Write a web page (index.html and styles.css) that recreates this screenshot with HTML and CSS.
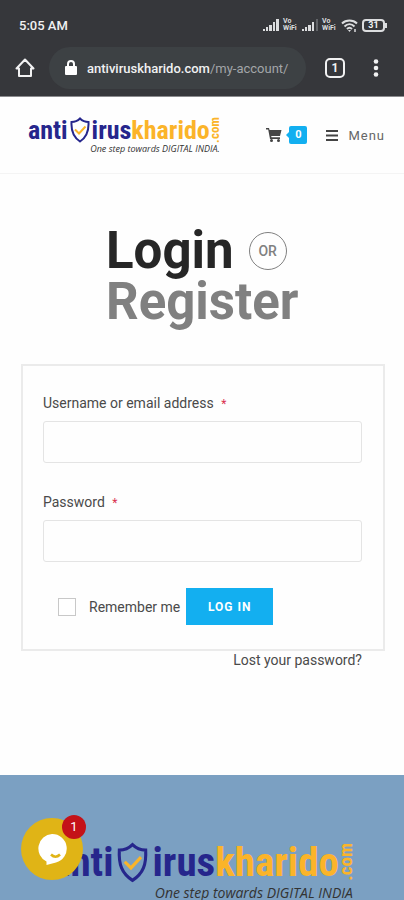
FILE: index.html
```html
<!DOCTYPE html>
<html lang="en">
<head>
    <meta charset="UTF-8">
    <meta name="viewport" content="width=device-width, initial-scale=1.0">
    <title>My account</title>
    <link rel="stylesheet" href="styles.css">
</head>
<body>
    <!-- Browser bar -->
    <div class="browser">
        <div class="status">
            <span class="time">5:05 AM</span>
            <div class="status-icons">
                <svg width="16" height="12" viewBox="0 0 16 12" fill="#dcdddf"><path d="M0 10h2v2H0zM3 8h2v4H3zM6 6h3v6H6zM10 3h2v9h-2zM13 0h3v12h-3z"/></svg>
                <span class="vo">Vo<br>WiFi</span>
                <svg width="16" height="12" viewBox="0 0 16 12" fill="#dcdddf"><path d="M0 10h2v2H0zM3 8h2v4H3zM6 6h3v6H6z"/><path d="M10 3h2v9h-2z"/><path d="M14 0h2v12h-2z" fill="#626468"/></svg>
                <span class="vo">Vo<br>WiFi</span>
                <svg width="17" height="13" viewBox="0 0 17 13" fill="none" stroke="#dcdddf" stroke-width="2"><path d="M1 4.500C5 .5 12 .5 16 4.500M3.500 7.500c3-3 7-3 10 0M6 10c1.500-1.500 3.500-1.500 5 0"/><path d="M7 11h3l-1.500 2z" fill="#dcdddf" stroke="none"/><path d="M14 10v3" stroke-width="1.500"/></svg>
                <span class="battery">31</span>
            </div>
        </div>
        <div class="toolbar">
            <button class="icon-btn" aria-label="Home">
                <svg width="20" height="20" viewBox="0 0 20 20" fill="none" stroke="#f1f1f2" stroke-width="2" stroke-linejoin="round"><path d="M1.500 10.500 10 1.500l8.500 9H16V18H4v-7.500z"/></svg>
            </button>
            <div class="address">
                <svg width="12" height="16" viewBox="0 0 12 16"><rect y="6" width="12" height="9" rx="1" fill="#fff"/><path d="M3 7V4a3 3 0 0 1 6 0v3" fill="none" stroke="#fff" stroke-width="2"/></svg>
                <span class="url">antiviruskharido.com<span class="path">/my-account/</span></span>
            </div>
            <button class="tabs" aria-label="Tabs">1</button>
            <button class="icon-btn" aria-label="More">
                <svg width="6" height="18" viewBox="0 0 6 18" fill="#f1f1f2"><circle cx="3" cy="2.500" r="2.300"/><circle cx="3" cy="9" r="2.300"/><circle cx="3" cy="15.500" r="2.300"/></svg>
            </button>
        </div>
    </div>

    <!-- Site header -->
    <header class="header">
        <a href="#" class="logo">
            <span class="logo-name">
                <span class="blue">anti</span>
                <svg class="shield" viewBox="0 0 20 26" fill="none"><path d="M10 1.500C7.500 4 4.500 5 1.500 5 1 14 3 20 10 24.500 17 20 19 14 18.500 5c-3 0-6-1-8.500-3.500z" stroke="#26268c" stroke-width="2"/><path d="M5 12.500l4 4 6.500-7" stroke="#fbb429" stroke-width="2"/></svg>
                <span class="blue">irus</span><span class="gold">kharido</span><span class="gold com">.com</span>
            </span>
            <span class="tagline">One step towards DIGITAL INDIA.</span>
        </a>
        <nav class="nav">
            <a href="#" class="cart">
                <svg width="16" height="14" viewBox="0 0 16 14" fill="#444"><path d="M0 0h3l.5 2H15.500L14 8H5.200l.3 1.300H14V11H4L2.200 1.500H0z"/><circle cx="5.500" cy="12.500" r="1.500"/><circle cx="12.500" cy="12.500" r="1.500"/></svg>
                <span class="count">0</span>
            </a>
            <a href="#" class="menu">
                <svg width="12" height="11" viewBox="0 0 12 11" fill="#444"><path d="M0 0h12v2H0zM0 4.500h12v2H0zM0 9h12v2H0z"/></svg>
                Menu
            </a>
        </nav>
    </header>

    <main class="account">
        <h1 class="title">
            <span class="login">Login</span>
            <span class="or">OR</span>
            <span class="register">Register</span>
        </h1>

        <form class="login-form">
            <label for="username">Username or email address <span class="required">*</span></label>
            <input type="text" id="username" class="field">
            <label for="password">Password <span class="required">*</span></label>
            <input type="password" id="password" class="field">
            <div class="actions">
                <input type="checkbox" id="remember">
                <label for="remember">Remember me</label>
                <button type="button" class="submit">LOG IN</button>
            </div>
        </form>
        <a href="#" class="lost">Lost your password?</a>
    </main>

    <footer class="footer">
        <a href="#" class="logo logo-large">
            <span class="logo-name">
                <span class="blue">anti</span>
                <svg class="shield" viewBox="0 0 20 26" fill="none"><path d="M10 1.500C7.500 4 4.500 5 1.500 5 1 14 3 20 10 24.500 17 20 19 14 18.500 5c-3 0-6-1-8.500-3.500z" stroke="#26268c" stroke-width="2"/><path d="M5 12.500l4 4 6.500-7" stroke="#fbb429" stroke-width="2"/></svg>
                <span class="blue">irus</span><span class="gold">kharido</span><span class="gold com">.com</span>
            </span>
            <span class="tagline">One step towards DIGITAL INDIA</span>
        </a>
    </footer>

    <button class="chat" aria-label="Chat">
        <svg width="32" height="32" viewBox="0 0 32 32"><path d="M16 1a14.500 14.500 0 0 1 4 28.500L10.500 32v-3.500A14.500 14.500 0 0 1 16 1z" fill="#fff"/><path d="M15 21.500q4.500 4.500 9 0" fill="none" stroke="#e0b416" stroke-width="2.500"/></svg>
        <span class="unread">1</span>
    </button>
</body>
</html>
```
FILE: styles.css
```css
* {
    box-sizing: border-box;
}
body {
    margin: 0;
    height: 100vh;
    overflow: hidden;
    display: flex;
    flex-direction: column;
    font-family: Roboto, "Liberation Sans", sans-serif;
    font-size: 14px;
    color: #4a4a4a;
    background: #fefefe;
}
a {
    color: inherit;
    text-decoration: none;
}
button {
    font-family: inherit;
    border: none;
    padding: 0;
    background: none;
    cursor: pointer;
}
svg {
    display: block;
    flex: none;
}

/* browser bar */
.browser {
    flex: none;
    background: #36373b;
    color: #f1f1f2;
    border-bottom: 1px solid #8b8b8e;
}
.status {
    display: flex;
    justify-content: space-between;
    align-items: center;
    height: 46px;
    padding: 4px 16px 0 19px;
}
.time {
    font-size: 13px;
    font-weight: 500;
}
.status-icons {
    display: flex;
    align-items: center;
    gap: 4px;
}
.vo {
    width: 15px;
    font-size: 7px;
    line-height: 7px;
    font-weight: 700;
    color: #dcdddf;
}
.battery {
    position: relative;
    width: 23px;
    height: 13px;
    margin-right: 3px;
    border: 2px solid #dcdddf;
    border-radius: 4px;
    font-size: 9px;
    line-height: 9px;
    font-weight: 700;
    text-align: center;
}
.battery::after {
    content: "";
    position: absolute;
    top: 2px;
    right: -4px;
    width: 2px;
    height: 5px;
    background: #dcdddf;
}
.toolbar {
    display: flex;
    align-items: center;
    height: 50px;
    padding: 0 18px 6px 15px;
}
.icon-btn {
    display: flex;
    justify-content: center;
    min-width: 20px;
}
.address {
    flex: 1;
    display: flex;
    align-items: center;
    gap: 10px;
    height: 42px;
    margin: 0 19px 0 14px;
    padding: 0 10px 0 16px;
    border-radius: 21px;
    background: #3d4144;
}
.url {
    font-size: 13px;
    font-weight: 500;
    white-space: nowrap;
}
.path {
    font-weight: 400;
    color: #a3a6a9;
}
.tabs {
    width: 20px;
    height: 20px;
    margin-right: 21px;
    border: 2px solid #f1f1f2;
    border-radius: 5px;
    font-size: 12px;
    line-height: 14px;
    font-weight: 700;
    color: #f1f1f2;
}

/* header */
.header {
    flex: none;
    display: flex;
    justify-content: space-between;
    align-items: center;
    height: 77px;
    padding: 0 19px 0 28px;
    border-bottom: 1px solid #f4f4f4;
}
.logo {
    display: flex;
    flex-direction: column;
    width: max-content;
}
.logo-name {
    display: flex;
    align-items: center;
    font-family: "Roboto Condensed", Roboto, sans-serif;
    font-size: 26px;
    line-height: 28px;
    font-weight: 700;
}
.blue {
    color: #26268c;
}
.gold {
    color: #fbb429;
}
.shield {
    width: 20px;
    height: 26px;
    margin: 0 2px;
}
.com {
    writing-mode: vertical-rl;
    transform: rotate(180deg);
    font-size: 13px;
    line-height: 10px;
}
.tagline {
    align-self: flex-end;
    font-family: "Open Sans", sans-serif;
    font-size: 9px;
    line-height: 10px;
    font-style: italic;
    color: #333;
}
.nav {
    display: flex;
    align-items: center;
    gap: 19px;
}
.cart,
.menu {
    display: flex;
    align-items: center;
}
.cart {
    gap: 7px;
}
.menu {
    gap: 10px;
    font-size: 13px;
    letter-spacing: 1px;
    color: #666;
}
.count {
    position: relative;
    width: 18px;
    border-radius: 2px;
    background: #13aff0;
    color: #fff;
    font-size: 11px;
    line-height: 18px;
    font-weight: 700;
    text-align: center;
}
.count::before {
    content: "";
    position: absolute;
    left: -3px;
    top: 6px;
    border: 3px solid transparent;
    border-left: none;
    border-right-color: #13aff0;
}

/* account */
.account {
    flex: none;
    padding: 51px 19px 106px 21px;
}
.title {
    display: flex;
    flex-wrap: wrap;
    align-items: center;
    column-gap: 15px;
    width: 194px;
    margin: 0 auto 37px;
    font-size: 51px;
    line-height: 51px;
    font-weight: 700;
}
.login {
    color: #262626;
}
.register {
    color: #808080;
}
.or {
    width: 38px;
    height: 38px;
    border: 1px solid #808080;
    border-radius: 50%;
    font-size: 14px;
    line-height: 36px;
    font-weight: 500;
    text-align: center;
    color: #808080;
}
.login-form {
    display: flex;
    flex-direction: column;
    padding: 27px 21px 24px 20px;
    border: 2px solid #ebebeb;
}
.login-form label {
    line-height: 20px;
}
.required {
    margin-left: 4px;
    font-size: 12px;
    line-height: 12px;
    color: #d9304f;
}
.field {
    width: 100%;
    height: 42px;
    margin: 8px 0 29px;
    padding: 6px 12px;
    border: 1px solid #e4e4e4;
    border-radius: 3px;
    background: #fefefe;
    font: inherit;
}
.field + .actions {
    margin-top: -3px;
}
.actions {
    display: flex;
    align-items: center;
    padding-left: 15px;
}
.actions input {
    appearance: none;
    width: 18px;
    height: 18px;
    margin: 0 13px 0 0;
    border: 1px solid #c8c8c8;
    background: #fff;
}
.submit {
    width: 87px;
    height: 37px;
    margin-left: 6px;
    background: #13aff0;
    color: #fff;
    font-size: 12px;
    font-weight: 700;
    letter-spacing: 1px;
}
.lost {
    display: block;
    margin-right: 23px;
    line-height: 18px;
    text-align: right;
}

/* footer */
.footer {
    flex: 1;
    min-height: 0;
    padding: 64px 0 0;
    background: #7ba0c2;
}
.logo-large {
    margin: 0 auto;
}
.logo-large .logo-name {
    font-size: 41px;
    line-height: 46px;
}
.logo-large .shield {
    width: 31px;
    height: 41px;
    margin: 0 4px;
}
.logo-large .com {
    font-size: 19px;
    line-height: 14px;
}
.logo-large .tagline {
    font-size: 14px;
    line-height: 16px;
}

/* chat */
.chat {
    position: fixed;
    left: 21px;
    bottom: 20px;
    display: flex;
    justify-content: center;
    align-items: center;
    width: 62px;
    height: 62px;
    border-radius: 50%;
    background: #e0b416;
}
.unread {
    position: absolute;
    top: -3px;
    right: -3px;
    width: 24px;
    border-radius: 50%;
    background: #c41218;
    color: #fff;
    font-size: 13px;
    line-height: 24px;
}
```
